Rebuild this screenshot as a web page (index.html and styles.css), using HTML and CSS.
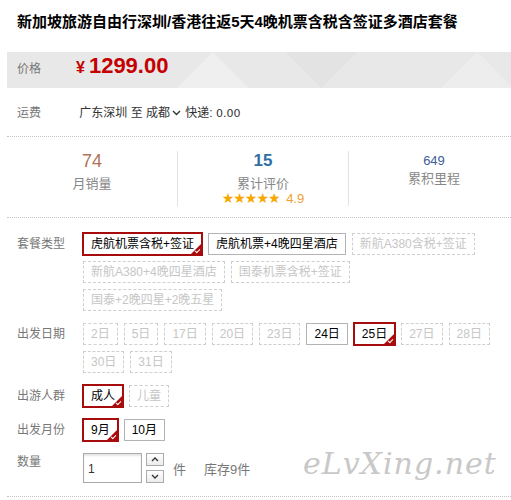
FILE: index.html
```html
<!DOCTYPE html>
<html lang="zh-CN">
<head>
    <meta charset="UTF-8">
    <meta name="viewport" content="width=device-width, initial-scale=1.0">
    <title>新加坡旅游自由行</title>
    <link rel="stylesheet" href="styles.css">
</head>
<body>
    <div class="page">
        <h1 class="title">新加坡旅游自由行深圳/香港往返5天4晚机票含税含签证多酒店套餐</h1>

        <div class="price-bar">
            <span class="label">价格</span>
            <span class="price"><em>¥</em>1299.00</span>
        </div>

        <div class="freight">
            <span class="label">运费</span>
            <span class="route">广东深圳 至 成都<svg class="chev" width="9" height="6" viewBox="0 0 9 6"><path d="M1 1 L4.5 4.5 L8 1" fill="none" stroke="#333" stroke-width="1.4"/></svg> 快递: <span class="num">0.00</span></span>
        </div>

        <div class="stats">
            <div class="stat">
                <div class="stat-num sales">74</div>
                <div class="stat-label">月销量</div>
            </div>
            <div class="stat">
                <div class="stat-num reviews">15</div>
                <div class="stat-label">累计评价</div>
                <div class="rating"><span class="stars">★★★★★</span> 4.9</div>
            </div>
            <div class="stat">
                <div class="stat-num miles">649</div>
                <div class="stat-label second">累积里程</div>
            </div>
        </div>

        <div class="options">
            <div class="group">
                <span class="group-label">套餐类型</span>
                <div class="choices">
                    <span class="opt sel">虎航机票含税+签证</span>
                    <span class="opt">虎航机票+4晚四星酒店</span>
                    <span class="opt off">新航A380含税+签证</span>
                    <span class="opt off">新航A380+4晚四星酒店</span>
                    <span class="opt off">国泰机票含税+签证</span>
                    <span class="opt off">国泰+2晚四星+2晚五星</span>
                </div>
            </div>

            <div class="group">
                <span class="group-label">出发日期</span>
                <div class="choices">
                    <span class="opt off">2日</span>
                    <span class="opt off">5日</span>
                    <span class="opt off">17日</span>
                    <span class="opt off">20日</span>
                    <span class="opt off">23日</span>
                    <span class="opt">24日</span>
                    <span class="opt sel">25日</span>
                    <span class="opt off">27日</span>
                    <span class="opt off">28日</span>
                    <span class="opt off">30日</span>
                    <span class="opt off">31日</span>
                </div>
            </div>

            <div class="group">
                <span class="group-label">出游人群</span>
                <div class="choices">
                    <span class="opt sel">成人</span>
                    <span class="opt off">儿童</span>
                </div>
            </div>

            <div class="group">
                <span class="group-label">出发月份</span>
                <div class="choices">
                    <span class="opt sel">9月</span>
                    <span class="opt">10月</span>
                </div>
            </div>

            <div class="group qty">
                <span class="group-label">数量</span>
                <input class="qty-input" type="text" value="1">
                <div class="spin">
                    <button class="spin-btn">
                        <svg width="8" height="5" viewBox="0 0 8 5"><path d="M1 4 L4 1 L7 4" fill="none" stroke="#333" stroke-width="1.3"/></svg>
                    </button>
                    <button class="spin-btn">
                        <svg width="8" height="5" viewBox="0 0 8 5"><path d="M1 1 L4 4 L7 1" fill="none" stroke="#333" stroke-width="1.3"/></svg>
                    </button>
                </div>
                <span class="unit">件</span>
                <span class="stock">库存9件</span>
            </div>
        </div>

        <div class="watermark">eLvXing.net</div>
    </div>
</body>
</html>
```

FILE: styles.css
```css
body, html {
    margin: 0;
    overflow: hidden;
}

body {
    font-family: "Liberation Sans", "Noto Sans CJK SC", sans-serif;
    font-size: 12px;
    color: #333;
}

.page {
    position: relative;
    padding-left: 7px;
    height: 500px;
}

.title {
    margin: 0 0 9px;
    padding-left: 10px;
    height: 43px;
    line-height: 43px;
    font-size: 15px;
    font-weight: bold;
    color: #000;
    white-space: nowrap;
}

.label {
    display: inline-block;
    width: 59px;
    color: #777;
}

.price-bar {
    height: 36px;
    line-height: 28px;
    padding-left: 10px;
    background-color: #e8e8e8;
    background-image:
        conic-gradient(from 135deg at 205px 0, rgba(255, 255, 255, 0.3) 0deg 90deg, transparent 90deg),
        conic-gradient(from 135deg at 470px 0, rgba(255, 255, 255, 0.2) 0deg 90deg, transparent 90deg),
        conic-gradient(from -45deg at 315px 36px, rgba(0, 0, 0, 0.025) 0deg 90deg, transparent 90deg);
    display: flex;
    align-items: baseline;
}

.price {
    font-family: "Liberation Sans", Arial, sans-serif;
    font-size: 22px;
    font-weight: bold;
    color: #c40000;
}

.price em {
    font-style: normal;
    font-size: 16px;
    margin-right: 4px;
}

.freight {
    padding: 15px 0 12px 10px;
    line-height: 20px;
}

.chev {
    margin: 0 1px 1px 2px;
    vertical-align: middle;
}

.num {
    font-family: "DejaVu Sans", sans-serif;
    font-size: 11px;
}

.stats {
    display: flex;
    border-top: 1px dotted #c4c4c4;
    border-bottom: 1px dotted #c4c4c4;
    padding: 14px 0 11px;
}

.stat {
    flex: 0 0 170px;
    height: 55px;
    text-align: center;
}

.stat + .stat {
    border-left: 1px solid #e2e2e2;
}

.stat-num {
    height: 20px;
    line-height: 20px;
    font-size: 18px;
}

.sales {
    color: #b0735a;
}

.reviews {
    color: #2f6ea6;
    font-weight: bold;
    font-size: 17px;
}

.miles {
    color: #3d5c98;
    font-size: 13px;
}

.stat-label {
    margin-top: 3px;
    line-height: 20px;
    font-size: 13px;
    color: #888;
}

.stat-label.second {
    margin-top: -2px;
}

.rating {
    margin-top: -3px;
    line-height: 15px;
    color: #f0a030;
    font-size: 13px;
}

.stars {
    font-family: "DejaVu Sans", sans-serif;
    font-size: 14px;
    color: #f7a800;
    letter-spacing: -1px;
    margin-right: 3px;
}

.options {
    padding-top: 15px;
    border-bottom: 1px dotted #c4c4c4;
}

.group {
    display: flex;
    align-items: flex-start;
    margin-bottom: 12px;
}

.group-label {
    flex: 0 0 66px;
    padding-left: 10px;
    line-height: 22px;
    color: #777;
}

.choices {
    display: flex;
    flex-wrap: wrap;
    gap: 6px;
    max-width: 410px;
}

.opt {
    position: relative;
    height: 20px;
    line-height: 20px;
    padding: 0 7px;
    border: 1px solid #b3b3b3;
    color: #000;
    white-space: nowrap;
}

.opt.off {
    border-style: dashed;
    border-color: #cfcfcf;
    color: #c6c6c6;
}

.opt.sel {
    border-color: #a80b0b;
    box-shadow: 0 0 0 1px #a80b0b;
}

.opt.sel::after {
    content: "";
    position: absolute;
    right: 0;
    bottom: 0;
    border-left: 10px solid transparent;
    border-bottom: 10px solid #a80b0b;
}

.opt.sel::before {
    content: "";
    position: absolute;
    right: 1px;
    bottom: 2px;
    width: 4px;
    height: 2px;
    border-left: 1px solid #fff;
    border-bottom: 1px solid #fff;
    transform: rotate(-45deg);
    z-index: 1;
}

.qty {
    margin-bottom: 0;
    padding-bottom: 13px;
    align-items: center;
}

.qty .group-label {
    align-self: flex-start;
    line-height: 20px;
    margin-top: -1px;
}

.qty-input {
    box-sizing: border-box;
    width: 59px;
    height: 30px;
    margin: 0;
    padding: 2px 0 0 4px;
    border: 1px solid #aaa;
    box-shadow: inset 0 2px 2px #e6e6e6;
    font-family: "Liberation Sans", sans-serif;
    font-size: 12px;
    color: #333;
    outline: none;
}

.spin {
    display: flex;
    flex-direction: column;
    gap: 4px;
    margin-left: 4px;
}

.spin-btn {
    box-sizing: border-box;
    width: 18px;
    height: 13px;
    padding: 0;
    border: 1px solid #aaa;
    background: linear-gradient(#fff, #ececec);
    display: flex;
    justify-content: center;
    align-items: center;
}

.unit {
    margin-left: 9px;
    font-size: 13px;
    color: #777;
}

.stock {
    margin-left: 18px;
    font-size: 13px;
    color: #777;
}

.watermark {
    position: absolute;
    left: 303px;
    top: 446px;
    font-family: "DejaVu Serif", serif;
    font-style: italic;
    font-size: 30px;
    color: #c8c8c8;
    letter-spacing: 1px;
}
```
